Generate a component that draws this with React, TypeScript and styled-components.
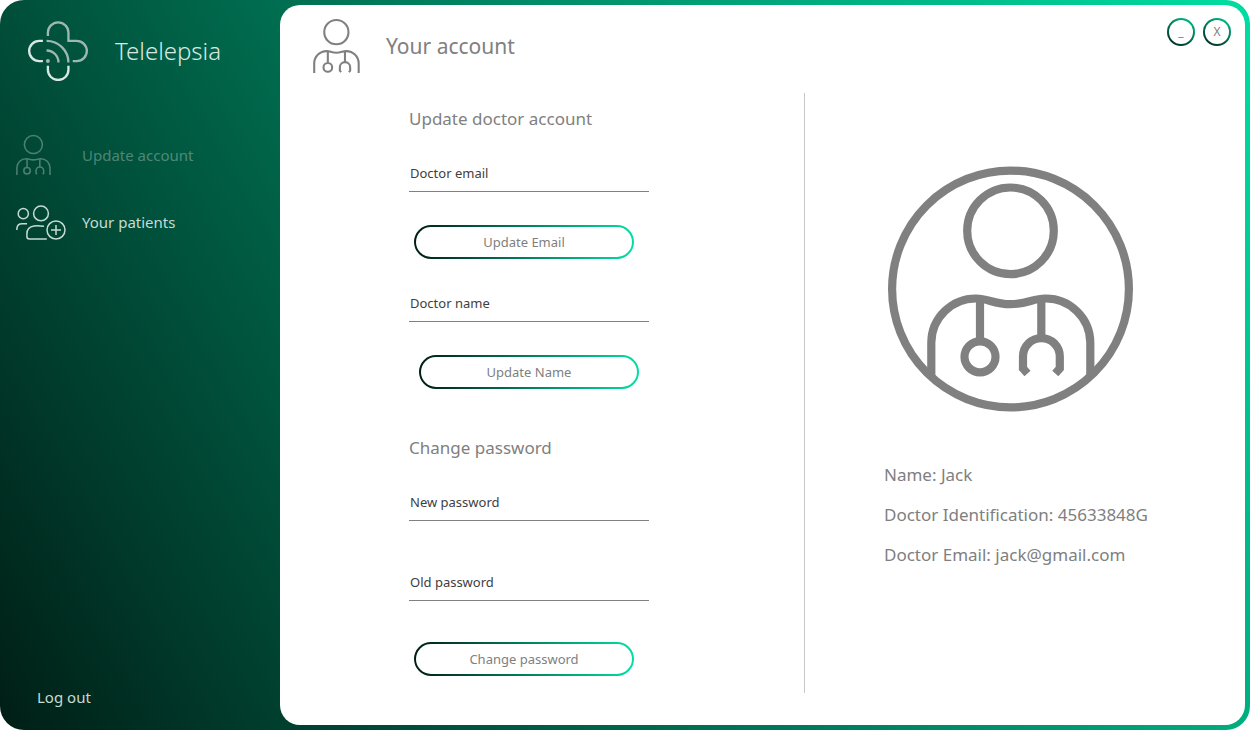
import React from "react";
import styled, { createGlobalStyle } from "styled-components";

const GlobalStyle = createGlobalStyle`
  *, *::before, *::after { box-sizing: border-box; }
  body {
    margin: 0;
    background: #ffffff;
    font-family: "Noto Sans", "Open Sans", sans-serif;
    color: #808080;
  }
  h1, h2, p { margin: 0; font-weight: 400; }
  button, input { font-family: inherit; }
`;

const Window = styled.div`
  display: grid;
  grid-template-columns: 280px minmax(0, 1fr);
  min-height: 100vh;
  border-radius: 24px;
  background: linear-gradient(60deg, #001e16, #00dea2);
`;

const Sidebar = styled.aside`
  display: flex;
  flex-direction: column;
`;

const Brand = styled.div`
  display: flex;
  align-items: center;
  gap: 27px;
  padding: 21px 28px 0;
  color: #d8e8e2;
  font-size: 24px;
  font-weight: 300;
  line-height: 60px;
`;

const Nav = styled.nav`
  display: flex;
  flex-direction: column;
  margin-top: 40px;
  padding: 0 16px;
`;

const NavLink = styled.a<{ $current?: boolean }>`
  display: flex;
  align-items: center;
  gap: 16px;
  height: 67px;
  color: #c6dbd3;
  font-size: 15px;
  text-decoration: none;
  opacity: ${(p) => (p.$current ? 0.38 : 1)};
`;

const IconSlot = styled.span`
  display: flex;
  width: 50px;
`;

const LogOut = styled.button`
  align-self: flex-start;
  margin: auto 0 21px 37px;
  padding: 0;
  border: 0;
  background: none;
  color: #c6dbd3;
  font-size: 15px;
  line-height: 24px;
  cursor: pointer;
`;

const Main = styled.main`
  display: flex;
  flex-direction: column;
  margin: 5px 5px 5px 0;
  padding-bottom: 32px;
  border-radius: 20px;
  background: #ffffff;
`;

const Header = styled.header`
  display: flex;
  align-items: flex-start;
  height: 88px;
  padding: 13px 14px 0 33px;
`;

const PageTitle = styled.h1`
  margin-left: 26px;
  font-size: 21px;
  line-height: 56px;
`;

const WindowControls = styled.div`
  display: flex;
  gap: 8px;
  margin-left: auto;
`;

const RoundButton = styled.button`
  width: 28px;
  height: 28px;
  padding: 0;
  border: 2px solid transparent;
  border-radius: 14px;
  background:
    linear-gradient(#ffffff, #ffffff) padding-box,
    linear-gradient(30deg, #001e16, #00c890) border-box;
  color: #808080;
  font-size: 12px;
  line-height: 24px;
  cursor: pointer;
`;

const Content = styled.div`
  display: grid;
  flex: 1;
  grid-template-columns: minmax(0, 525fr) minmax(0, 440fr);
`;

const FormColumn = styled.div`
  padding: 14px 0 0 129px;
  border-right: 1px solid #c8c8c8;
`;

const Form = styled.form`
  display: flex;
  flex-direction: column;
  width: 240px;
`;

const SectionTitle = styled.h2`
  margin-bottom: 25px;
  font-size: 17px;
  line-height: 24px;
  white-space: nowrap;
`;

const Field = styled.input`
  width: 100%;
  height: 36px;
  padding: 0 1px 2px;
  border: 0;
  border-bottom: 1px solid #808080;
  background: none;
  color: #404040;
  font-size: 13px;
  outline: 0;

  &::placeholder {
    color: #404040;
    opacity: 1;
  }
`;

const FieldStack = styled.div`
  display: flex;
  flex-direction: column;
  gap: 44px;
`;

const PillButton = styled.button<{ $inset: number; $above: number; $below?: number }>`
  width: 220px;
  height: 34px;
  margin: ${(p) => p.$above}px 0 ${(p) => p.$below ?? 0}px ${(p) => p.$inset}px;
  padding: 0;
  border: 2px solid transparent;
  border-radius: 17px;
  background:
    linear-gradient(#ffffff, #ffffff) padding-box,
    linear-gradient(90deg, #001e16, #00e0a4) border-box;
  color: #808080;
  font-size: 13px;
  cursor: pointer;
`;

const Profile = styled.section`
  padding: 73px 0 0 79px;
`;

const Portrait = styled.div`
  display: flex;
  margin: 0 0 43px 4px;
`;

const Detail = styled.p`
  font-size: 17px;
  line-height: 40px;
  white-space: nowrap;
`;

function DoctorFigure() {
  return (
    <>
      <circle cx="122.5" cy="64.3" r="43.3" />
      <path d="M43.3 210V176A44.5 44.5 0 0 1 88.7 132C100 132 106 137.7 122.5 137.7S145 132 157 132A44.5 44.5 0 0 1 202.3 176V210" />
      <path d="M92 134V172M153.3 134V172" />
      <circle cx="92" cy="190.3" r="15.5" />
      <path d="M139.5 207L135 202V190A18.4 18.4 0 0 1 171.8 190V202L167.3 207" />
    </>
  );
}

function DoctorIcon({ width, height }: { width: number; height: number }) {
  return (
    <svg width={width} height={height} viewBox="39 14 168 196" fill="none" stroke="currentColor" strokeWidth="7.5" aria-hidden="true">
      <DoctorFigure />
    </svg>
  );
}

function DoctorPortrait() {
  return (
    <svg width="246" height="246" viewBox="0 -0.5 246 246" fill="none" stroke="currentColor" strokeWidth="8.2" role="img" aria-label="Doctor">
      <circle cx="122.5" cy="122.5" r="118.4" />
      <DoctorFigure />
    </svg>
  );
}

function PatientsIcon() {
  return (
    <svg width="50" height="36" viewBox="16 204 50 36" fill="none" stroke="currentColor" strokeWidth="1.5" aria-hidden="true">
      <circle cx="23.3" cy="213.7" r="5.1" />
      <circle cx="41" cy="213.4" r="7.4" />
      <path d="M16.9 230V228.5C17.2 225.2 19.2 223.7 22 223.7H27" />
      <path d="M44 226.2C40.5 225.9 37.5 225.6 34 226C29.5 226.6 26.9 229.8 26.9 234V236.5Q26.9 239 29.5 239H46.8" />
      <circle cx="56" cy="230" r="9" />
      <path d="M51 230H61M56 225V235" />
    </svg>
  );
}

function Logo() {
  return (
    <svg width="60" height="60" viewBox="84 62 181 181" fill="none" strokeWidth="7" aria-hidden="true">
      <g stroke="#9fb8af">
        <path d="M144 107V97A31 31 0 0 1 206 97V122H231A30.5 30.5 0 0 1 231 183H219" />
        <path d="M140 122A66 66 0 0 1 206 187" />
        <path d="M140 151A36 36 0 0 1 176 187" />
      </g>
      <circle cx="144" cy="183" r="6" fill="#9fb8af" />
      <g stroke="#d8e8e2">
        <path d="M129 122H118A30.5 30.5 0 0 0 118 183H129" />
        <path d="M144 197V209A31 31 0 0 0 206 209V197" />
      </g>
    </svg>
  );
}

export default function App() {
  return (
    <>
      <GlobalStyle />
      <Window>
        <Sidebar>
          <Brand>
            <Logo />
            Telelepsia
          </Brand>
          <Nav>
            <NavLink href="#account" aria-current="page" $current>
              <IconSlot>
                <DoctorIcon width={35} height={41} />
              </IconSlot>
              Update account
            </NavLink>
            <NavLink href="#patients">
              <IconSlot>
                <PatientsIcon />
              </IconSlot>
              Your patients
            </NavLink>
          </Nav>
          <LogOut type="button">Log out</LogOut>
        </Sidebar>

        <Main>
          <Header>
            <DoctorIcon width={47} height={55} />
            <PageTitle>Your account</PageTitle>
            <WindowControls>
              <RoundButton type="button" aria-label="Minimize">_</RoundButton>
              <RoundButton type="button" aria-label="Close">X</RoundButton>
            </WindowControls>
          </Header>

          <Content>
            <FormColumn>
              <Form onSubmit={(e) => e.preventDefault()}>
                <SectionTitle>Update doctor account</SectionTitle>
                <Field type="email" placeholder="Doctor email" aria-label="Doctor email" />
                <PillButton type="button" $inset={5} $above={33} $below={27}>Update Email</PillButton>
                <Field type="text" placeholder="Doctor name" aria-label="Doctor name" />
                <PillButton type="button" $inset={10} $above={33} $below={47}>Update Name</PillButton>
                <SectionTitle>Change password</SectionTitle>
                <FieldStack>
                  <Field type="password" placeholder="New password" aria-label="New password" />
                  <Field type="password" placeholder="Old password" aria-label="Old password" />
                </FieldStack>
                <PillButton type="button" $inset={5} $above={41}>Change password</PillButton>
              </Form>
            </FormColumn>

            <Profile>
              <Portrait>
                <DoctorPortrait />
              </Portrait>
              <Detail>Name: Jack</Detail>
              <Detail>Doctor Identification: 45633848G</Detail>
              <Detail>Doctor Email: jack@gmail.com</Detail>
            </Profile>
          </Content>
        </Main>
      </Window>
    </>
  );
}
